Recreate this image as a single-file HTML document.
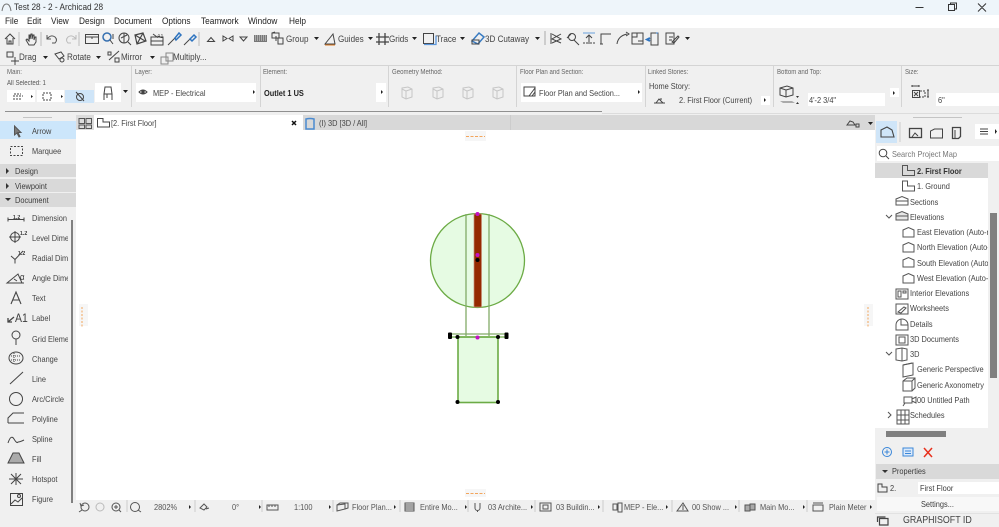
<!DOCTYPE html>
<html><head><meta charset="utf-8"><style>
html,body{margin:0;padding:0}
body{width:999px;height:527px;overflow:hidden;position:relative;background:#f0f0f0;font-family:"Liberation Sans",sans-serif;color:#333}
.r{position:absolute}
.t{position:absolute;white-space:nowrap;font-size:8.5px;line-height:10px;color:#3c3c3c;transform:scaleX(.87);transform-origin:0 0}
.m{font-size:9.5px;top:17px;color:#222}
.b{font-size:9.3px;color:#444}
.l{font-size:7px;color:#666;top:68px}
.n{font-size:8.5px;color:#444;left:32px}
.p{font-size:8.5px;color:#444}
.s{font-size:8.5px;color:#555;top:502px}
svg{position:absolute;left:0;top:0}
</style></head><body>
<div class="r" style="left:0;top:0;width:999px;height:15px;background:#eef5fa"></div>
<div class="r" style="left:0;top:15px;width:999px;height:13px;background:#fff"></div>
<div class="r" style="left:0;top:65px;width:999px;height:1px;background:#d4d4d4"></div>
<div class="r" style="left:5px;top:111px;width:597px;height:1px;background:#909090"></div>
<div class="r" style="left:602px;top:113px;width:397px;height:1px;background:#dcdcdc"></div>
<div class="r" style="left:23px;top:117px;width:29px;height:1px;background:#c4c4c4"></div>
<div class="r" style="left:913px;top:117px;width:49px;height:1px;background:#c4c4c4"></div>
<div class="r" style="left:76px;top:115px;width:799px;height:15px;background:#d8d8d8"></div>
<div class="r" style="left:94px;top:115px;width:209px;height:15px;background:#fff"></div>
<div class="r" style="left:76px;top:115px;width:18px;height:15px;background:#dcdcdc"></div>
<div class="r" style="left:510px;top:115px;width:1px;height:15px;background:#ccc"></div>
<div class="r" style="left:76px;top:130px;width:799px;height:367px;background:#fff"></div>
<div class="r" style="left:76px;top:497px;width:799px;height:3px;background:#fff"></div>
<div class="r" style="left:0;top:121px;width:76px;height:18px;background:#cce6fb"></div>
<div class="r" style="left:0;top:164px;width:76px;height:13px;background:#d9d9d9"></div>
<div class="r" style="left:0;top:179px;width:76px;height:13px;background:#d9d9d9"></div>
<div class="r" style="left:0;top:193px;width:76px;height:14px;background:#d9d9d9"></div>
<div class="r" style="left:71px;top:220px;width:2px;height:283px;background:#808080"></div>
<div class="r" style="left:79px;top:304px;width:9px;height:22px;background:#f6f6f6"></div>
<div class="r" style="left:864px;top:304px;width:9px;height:22px;background:#f6f6f6"></div>
<div class="r" style="left:465px;top:131px;width:21px;height:10px;background:#f6f6f6"></div>
<div class="r" style="left:465px;top:489px;width:21px;height:8px;background:#f6f6f6"></div>

<!-- option bar fields -->
<div class="r" style="left:7px;top:90px;width:28px;height:12px;background:#fff"></div>
<div class="r" style="left:37px;top:90px;width:27px;height:12px;background:#fff"></div>
<div class="r" style="left:65px;top:90px;width:29px;height:13px;background:#cfe5f8"></div>
<div class="r" style="left:95px;top:83px;width:26px;height:19px;background:#fff"></div>
<div class="r" style="left:136px;top:83px;width:120px;height:19px;background:#fff"></div>
<div class="r" style="left:376px;top:83px;width:10px;height:19px;background:#fff"></div>
<div class="r" style="left:521px;top:83px;width:121px;height:19px;background:#fff"></div>
<div class="r" style="left:761px;top:96px;width:9px;height:9px;background:#fff"></div>
<div class="r" style="left:808px;top:93px;width:77px;height:13px;background:#fff"></div>
<div class="r" style="left:890px;top:88px;width:9px;height:9px;background:#fff"></div>
<div class="r" style="left:936px;top:93px;width:63px;height:13px;background:#fff"></div>
<div class="r" style="left:131px;top:66px;width:1px;height:41px;background:#d4d4d4"></div>
<div class="r" style="left:260px;top:66px;width:1px;height:41px;background:#d4d4d4"></div>
<div class="r" style="left:388px;top:66px;width:1px;height:41px;background:#d4d4d4"></div>
<div class="r" style="left:516px;top:66px;width:1px;height:41px;background:#d4d4d4"></div>
<div class="r" style="left:645px;top:66px;width:1px;height:41px;background:#d4d4d4"></div>
<div class="r" style="left:773px;top:66px;width:1px;height:41px;background:#d4d4d4"></div>
<div class="r" style="left:901px;top:66px;width:1px;height:41px;background:#d4d4d4"></div>

<!-- right panel -->
<div class="r" style="left:876px;top:121px;width:21px;height:22px;background:#cfe5f8"></div>
<div class="r" style="left:975px;top:124px;width:24px;height:15px;background:#fff"></div>
<div class="r" style="left:877px;top:146px;width:122px;height:15px;background:#fff"></div>
<div class="r" style="left:875px;top:163px;width:113px;height:265px;background:#fff"></div>
<div class="r" style="left:875px;top:163px;width:113px;height:15px;background:#d9d9d9"></div>
<div class="r" style="left:990px;top:213px;width:7px;height:165px;background:#808080"></div>
<div class="r" style="left:886px;top:431px;width:60px;height:6px;background:#808080"></div>
<div class="r" style="left:876px;top:464px;width:123px;height:15px;background:#d9d9d9"></div>
<div class="r" style="left:918px;top:482px;width:81px;height:12px;background:#fff"></div>
<div class="r" style="left:877px;top:497px;width:122px;height:14px;background:#f8f8f8"></div>
<div class="r" style="left:875px;top:513px;width:124px;height:1px;background:#e2e2e2"></div>

<svg width="999" height="527" viewBox="0 0 999 527" fill="none" stroke="#444" stroke-width="1">
<!-- title -->
<path d="M2 11Q3 4 6.500 4Q10 4 11 11" stroke="#777"/>
<path d="M915.500 7.500h8M948.500 4.500h6v6h-6zM950.500 4.500v-1.500h6v6h-2M978 3.500l8 8M986 3.500l-8 8" stroke="#333"/>
<!-- toolbar row 1 -->
<path d="M19 32v14M41 32v14M79 32v14M199 32v14" stroke="#bbb"/>
<path d="M5 39l5-5 5 5M7 38v6h6v-6M9 44v-3h2v3"/>
<path d="M29 45l-3-5 1-1 2 2v-6h1v4l1-5h1v5l1-4h1v5l1-3h1v5l-2 3z"/>
<path d="M47 39q4-5 8-2q3 3 0 6h-3M47 35v4h4" stroke="#555"/>
<path d="M76 39q-4-5-8-2q-3 3 0 6h3M76 35v4h-4" stroke="#bbb"/>
<rect x="85.500" y="34.500" width="13" height="9"/><path d="M85 37h13M92 37v2" />
<circle cx="107" cy="37" r="4" stroke="#356fb0" stroke-width="1.500"/><path d="M110 40l3 4M113 34v5"/>
<circle cx="124" cy="38" r="5"/><path d="M128 42l3 3M121 38l6-3M124 33v10"/>
<path d="M135 35l8-2 3 8-9 3zM135 35l10 6M143 33l-6 11" stroke-width="1.200"/>
<path d="M151 37h12v8h-12zM151 41h12" /><path d="M153 34l4 3"/>
<path d="M168 45l7-7" stroke="#444"/><path d="M175 38l4-5 2 2-5 5z" stroke="#2e74c0" stroke-width="1.500"/>
<path d="M184 45l6-6" stroke="#444"/><path d="M190 39l4-4 2 2-4 4z" stroke="#2e74c0" stroke-width="1.500"/>
<path d="M207.500 41.500l3.500-4 3.500 4zM223 36v5l4-2.500zM233 36v5l-4-2.500zM240 37h7l-3.500 4z"/>
<rect x="254" y="35" width="13" height="7" fill="#777" stroke="none"/>
<path d="M255 36h11M255 38h11M255 40h11" stroke="#ddd" stroke-dasharray="1 1"/>
<path d="M272 33h7v5h-7zM279 38h4v6h-5v-6" /><path d="M272 33l3-1M276 36v5"/>
<path d="M314 37l5 0-2.500 3z" fill="#222" stroke="none"/>
<path d="M325 44l8-10 2 10z"/><path d="M325 45h10" stroke="#e07a20"/>
<path d="M368 37l5 0-2.500 3z" fill="#222" stroke="none"/>
<path d="M376 37h13M376 42h13M379 33v12M385 33v12" stroke-width="1.300"/>
<path d="M412 37l5 0-2.500 3z" fill="#222" stroke="none"/>
<rect x="423.500" y="33.500" width="10" height="10"/><path d="M424 44.500h12v-9" stroke="#5c98dc" stroke-width="1.300"/>
<path d="M460 37l5 0-2.500 3z" fill="#222" stroke="none"/>
<path d="M472 41l7-8 5 4-6 7z" stroke="#3a7cc2" stroke-width="1.500"/><path d="M472 40h7v4h-7z"/>
<path d="M535 37l5 0-2.500 3z" fill="#222" stroke="none"/>
<path d="M545 31v14" stroke="#aaa"/>
<path d="M552 34l9 5-9 4M561 34l-9 5 9 4M551 33v11" />
<circle cx="572" cy="37" r="3.500"/><path d="M574 40l5 5M567 38l4-4"/>
<path d="M583 33h12" stroke="#68a1dd"/><path d="M589 44v-9M586 38l3-3 3 3M584 44v-2M587 44v-2M591 44v-2M594 44v-2"/>
<path d="M601 44v-10h10M603 34h6M600 44h3"/>
<path d="M617 44q1-8 10-10M626 32l3 2-3 2"/>
<path d="M632 33h11v11h-11zM632 37h5v-4M638 41h5" />
<rect x="651" y="33" width="7" height="12"/><path d="M656 33h2" stroke="#2e74c0"/><path d="M650 38l-3 1.500 3 1.500" stroke="#2e74c0" stroke-width="2"/>
<path d="M666 33h8v11h-8zM669 37h4M669 40h3M672 42l6-6 1 1-5 6z"/>
<path d="M685 37l5 0-2.500 3z" fill="#222" stroke="none"/>
<!-- toolbar row 2 -->
<path d="M7 52h6v5h-6zM11 61h8M15 57v8"/>
<path d="M43 56l5 0-2.500 3z M96 56l5 0-2.500 3zM150 56l5 0-2.500 3z" fill="#222" stroke="none"/>
<path d="M55 54l6-2 3 4-5 3z"/><circle cx="62" cy="60" r="2"/>
<path d="M109 60l10-9M108 52h3v3h-3zM115 58h4v4h-4z"/>
<rect x="166" y="53" width="7" height="8" stroke="#888"/><rect x="161" y="57" width="7" height="7" stroke="#888"/>
<!-- option bar -->
<path d="M13 99h9M13 96h10M14 94h7" stroke="#444" stroke-dasharray="2 1"/>
<path d="M31 95l2 1.500-2 1.500zM61 95l2 1.500-2 1.500z" fill="#222" stroke="none"/>
<path d="M43 93h8v7h-8z" stroke-dasharray="2 1"/>
<circle cx="80" cy="97" r="3.500"/><path d="M76 92l8 9"/>
<path d="M105 87h6l1 7h-8zM104 94v6M112 94v6M107 94v4"/>
<path d="M123 90l5 0-2.500 3zM253 90l0 4 2-2zM381 90l0 4 2-2zM638 90l0 4 2-2z" fill="#222" stroke="none"/>
<path d="M139 92q4-4 8 0q-4 4-8 0z"/><circle cx="143" cy="92" r="1.300" fill="#444"/>
<g stroke="#c6c6c6"><path d="M402 88l6-1 4 2v8l-6 2-4-2zM402 89l4 2v8M406 91l6-2"/><path d="M433 88l6-1 4 2v8l-6 2-4-2zM433 89l4 2v8M437 91l6-2"/><path d="M463 88l6-1 4 2v8l-6 2-4-2zM463 89l4 2v8M467 91l6-2"/><path d="M493 88l6-1 4 2v8l-6 2-4-2zM493 89l4 2v8M497 91l6-2"/></g>
<rect x="524" y="87" width="11" height="9"/><path d="M529 96l6-8M532 96l3-4"/>
<path d="M654 103h11M656 103l3-4 4 4M660 99h2" />
<path d="M764 98l0 4 2-2zM893 91l0 4 2-2z" fill="#222" stroke="none"/>
<path d="M780 88l7-2 6 2v7l-7 2-6-2zM780 88l6 2v7M786 90l7-2"/>
<path d="M780 101h12l3 2h-12z" fill="#aaa" stroke="none"/>
<path d="M796 96l3 0-1.500 2zM796 104l3 0-1.500-2z" fill="#333" stroke="none"/>
<path d="M912 86h7M912 85v2M919 85v2"/><rect x="912.500" y="90.500" width="7" height="7"/><path d="M914 92l4 4M918 92l-4 4"/><path d="M920 91h5v6h-5" stroke-dasharray="2 1"/><path d="M928 90v7M927 90h2M927 97h2"/>
<!-- tabs -->
<path d="M79 118.500h5.500v5h-5.500zM86 118.500h5.500v5h-5.500zM79 125h5.500v3.500h-5.500zM86 125h5.500v3.500h-5.500z" stroke="#555"/>
<path d="M97.500 118.500v8.500h12v-5h-6.500v-3.500z"/>
<path d="M292 121l4 4M296 121l-4 4" stroke="#111" stroke-width="1.500"/>
<path d="M306 119q4-1 8 0v10h-8z" stroke="#4a8ad0" stroke-width="1.500"/>
<path d="M847 125l3-4 3 1 2 3zM847 125h8M856 124h3v3h-3z"/><path d="M868 122l5 0-2.500 3z" fill="#222" stroke="none"/>
<!-- left panel -->
<path d="M14.500 126v9l2.500-2 2 4 1-.5-2-4h3z" fill="#7a7a7a" stroke="#555"/>
<rect x="10.500" y="146.500" width="12" height="9" stroke-dasharray="2 1.500"/>
<path d="M6 168v6l3-3zM6 183v6l3-3zM5 198l6 0-3 3z" fill="#333" stroke="none"/>
<path d="M8 219.500h16M8 217.500v4M24 217.500v4"/>
<circle cx="15" cy="237" r="4.500"/><path d="M9 237h12M15 231v12"/>
<path d="M11 256l4 3.500M23 251l-8 8.500v4"/>
<path d="M7 283l11-9 4 9zM7 283h17M14 279l3 2"/>
<path d="M11 304l5-12 5 12M13 300h6" stroke-width="1.100"/>
<path d="M8 322l6-5M8 318v4h4" stroke-width="1.300"/>
<circle cx="16" cy="335" r="4"/><path d="M16 339v6"/>
<ellipse cx="16" cy="358" rx="7" ry="6"/><path d="M11 356h10M11 360h10M14 353v10" stroke-dasharray="1 1"/>
<path d="M10 384l13-12"/>
<circle cx="16" cy="399" r="6.500"/>
<path d="M8 423v-5l5-5h11M8 423h16"/>
<path d="M8 443q3-9 6-4t4 3q2 0 6-2"/>
<path d="M8 463l5-10h6l5 10z" fill="#aaa"/>
<path d="M16 473v12M9 479h14M11 474l10 10M21 474l-10 10"/>
<rect x="10.500" y="493.500" width="12" height="12"/><path d="M11 504l4-4 3 2 4-4"/><circle cx="19" cy="496" r="1.500"/>
<!-- canvas -->
<path d="M82 307v20M868 307v20" stroke="#f3a55c" stroke-dasharray="2 1.500"/>
<path d="M466 136.500h19M466 493.500h19" stroke="#f3a55c" stroke-dasharray="3 1.500"/>
<circle cx="477.500" cy="260.500" r="47" fill="#e6fbe3" stroke="#6cab45" stroke-width="1.300"/>
<rect x="458" y="337" width="40" height="65.500" fill="#e6fbe3" stroke="#6cab45" stroke-width="1.600"/>
<path d="M466 214v122M489 214v122" stroke="#82ab68" stroke-width="1.300"/>
<path d="M450 334h56" stroke="#82ab68" stroke-width="1.300"/><path d="M450 337h56" stroke="#6cab45" stroke-width="1.300"/>
<rect x="474" y="214" width="7.500" height="93" fill="#952a00" stroke="#c78d75" stroke-width=".7"/>
<g fill="#000" stroke="none"><circle cx="477.500" cy="260" r="2"/><circle cx="457.500" cy="337" r="2"/><circle cx="498" cy="337" r="2"/><circle cx="457.500" cy="402" r="2"/><circle cx="498" cy="402" r="2"/><rect x="448" y="332.500" width="4" height="6.500" rx="1"/><rect x="504.500" y="332.500" width="4" height="6.500" rx="1"/></g>
<g fill="#c412c4" stroke="none"><circle cx="477.500" cy="214" r="2"/><circle cx="477.500" cy="255" r="2"/><circle cx="477.500" cy="337.500" r="2"/></g>
<!-- right panel icons -->
<path d="M881 137v-7l6-3 5 3 2 7zM881 137h13" stroke-width="1.100"/>
<path d="M900 122v20" stroke="#ccc"/>
<rect x="909.500" y="128.500" width="12" height="9" stroke-width="1.300"/><path d="M912 137l3-4 3 3"/>
<path d="M930.500 138v-7l4-2h8v9zM942.500 138v-9"/>
<path d="M952.500 127.500h8v9l-2 2h-6z" stroke-width="1.300"/><path d="M955 130v8"/>
<path d="M980 129h8M980 131.500h8M980 134h8" stroke-width="1.100"/>
<path d="M995 129v5l2-2.500z" fill="#222" stroke="none"/>
<circle cx="883" cy="153" r="3.800"/><path d="M886 156l3 3"/>
<g stroke="#555">
<path d="M902.500 165.500v10h12v-5h-7v-5z"/><path d="M902.500 181v10h12v-5h-7v-5z"/>
<path d="M896 199l6-2.500 6 2.500v6h-12zM896 201h12"/>
<path d="M896 214l6-2.500 6 2.500v6h-12zM896 216h12" fill="#e6e6e6"/>
<path d="M903 230l5.500-2.500 5.500 2.500v7h-11zM903 245l5.500-2.500 5.500 2.500v7h-11zM903 260l5.500-2.500 5.500 2.500v7h-11zM903 276l5.500-2.500 5.500 2.500v7h-11z"/>
<path d="M896 289h12v10h-12zM898 291h3v6h-3zM903 291h3v2h-3z"/>
<path d="M896 304h12v10h-12zM898 312l6-5 2 1-5 5z"/>
<path d="M896 325a6 6 0 1 1 12 0v5h-12zM901 319v6h7"/>
<path d="M896 335h12v10h-12zM899 337h6v6h-6z"/>
<path d="M896 349l6-1 5 1v11l-5 1-6-1zM902 348v13"/>
<path d="M903 365l10-2v12l-10 2z"/><path d="M903 365l9-2"/>
<path d="M903 381l4-3h8v10l-3 3h-9zM903 381h9v10M912 381l3-3"/>
<path d="M904 397h8v6h-8zM912 399l4-2v6l-4-2M905 403l-2 3"/>
<path d="M897 410h12v14h-12zM897 415h12M897 420h12M901 410v14M905 410v14"/>
<path d="M886 215l3 3 3-3M886 352l3 3 3-3M888 412l3 3-3 3" />
</g>
<circle cx="887" cy="452" r="4.500" stroke="#3b87d9"/><path d="M884.500 452h5M887 449.500v5" stroke="#3b87d9"/>
<rect x="903" y="448" width="10" height="8" stroke="#3b87d9" fill="#dbeafa"/><path d="M905 451h6M905 453.500h6" stroke="#3b87d9"/>
<path d="M924 448l8 9M932 448l-8 9" stroke="#e8301c" stroke-width="1.500"/>
<path d="M882 470l6 0-3 3z" fill="#333" stroke="none"/>
<path d="M878 484v8h9v-5h-5v-3z"/>
<path d="M879.500 518.500h8.500v6.500h-8.500zM877.500 522v-5h8" stroke-width="1.200"/>
<!-- bottom bar -->
<g stroke="#555">
<circle cx="85" cy="507" r="4"/><path d="M82 510l-3 2M80 503l1 3 3-1"/>
<circle cx="100" cy="507" r="4" stroke="#bbb"/>
<circle cx="116" cy="507" r="4"/><path d="M119 510l2 2M114 507h4M116 505v4"/>
<circle cx="135" cy="507" r="4.500"/><path d="M138 510l3 2"/>
<path d="M200 508l4-4 3 3-3 3zM206 509l3-1"/>
<rect x="267" y="505" width="11" height="5"/><path d="M269 505v2M272 505v2M275 505v2"/>
<path d="M337 505l8-1v5l-8 2zM337 505l3-2h8v5l-3 1"/>
<rect x="405" y="503" width="9" height="8"/><path d="M405 505h9M405 507h9M405 509h9"/>
<path d="M475 503v5a2.500 2.500 0 0 0 5 0v-5M477.500 510v2"/>
<rect x="540" y="503" width="11" height="8"/><rect x="543" y="505" width="5" height="4"/>
<path d="M613 504h4v6h-4zM618 503h4v9h-4z"/>
<path d="M677 511l6-8 5 8zM683 505v5"/>
<path d="M745 505h5v6h-5zM750 504h5v6h-5z" fill="#aaa"/>
<path d="M813 503h10M813 505h10v6h-10zM813 511h10"/>
</g>
<path d="M189 505l0 4 2-2zM259 505l0 4 2-2zM329 505l0 4 2-2zM394 505l0 4 2-2zM465 505l0 4 2-2zM531 505l0 4 2-2zM598 505l0 4 2-2zM666 505l0 4 2-2zM735 505l0 4 2-2zM803 505l0 4 2-2zM870 505l0 4 2-2z" fill="#222" stroke="none"/>
<path d="M127 500v12M195 500v12M262 500v12M333 500v12M400 500v12M468 500v12M535 500v12M603 500v12M672 500v12M739 500v12M807 500v12" stroke="#ccc"/>
</svg>

<div class="t" style="left:14px;top:3px;font-size:9.500px;color:#333">Test 28 - 2 - Archicad 28</div>
<div class="t m" style="left:5px">File</div><div class="t m" style="left:27px">Edit</div><div class="t m" style="left:51px">View</div><div class="t m" style="left:79px">Design</div><div class="t m" style="left:114px">Document</div><div class="t m" style="left:162px">Options</div><div class="t m" style="left:201px">Teamwork</div><div class="t m" style="left:248px">Window</div><div class="t m" style="left:289px">Help</div>

<div class="t" style="left:157px;top:32px;font-size:6px">A1</div>
<div class="t" style="left:13px;top:213px;font-size:6px;font-weight:bold">1.2</div>
<div class="t" style="left:20px;top:229px;font-size:6px;font-weight:bold">1.2</div>
<div class="t" style="left:18px;top:249px;font-size:6px;font-weight:bold">1.2</div>
<div class="t" style="left:20px;top:272px;font-size:9px">α</div>
<div class="t" style="left:15px;top:312px;font-size:12px;line-height:12px">A1</div>

<div class="t b" style="left:286px;top:34px">Group</div><div class="t b" style="left:338px;top:34px">Guides</div><div class="t b" style="left:389px;top:34px">Grids</div><div class="t b" style="left:436px;top:34px">Trace</div><div class="t b" style="left:485px;top:34px">3D Cutaway</div>
<div class="t b" style="left:19px;top:52px">Drag</div><div class="t b" style="left:67px;top:52px">Rotate</div><div class="t b" style="left:121px;top:52px">Mirror</div><div class="t b" style="left:173px;top:52px">Multiply...</div>

<div class="t l" style="left:7px">Main:</div><div class="t l" style="left:135px">Layer:</div><div class="t l" style="left:263px">Element:</div><div class="t l" style="left:392px">Geometry Method:</div><div class="t l" style="left:520px">Floor Plan and Section:</div><div class="t l" style="left:648px">Linked Stories:</div><div class="t l" style="left:777px">Bottom and Top:</div><div class="t l" style="left:905px">Size:</div>
<div class="t" style="left:7px;top:79px;font-size:7px;color:#555">All Selected: 1</div>
<div class="t" style="left:153px;top:88px;color:#444">MEP - Electrical</div>
<div class="t" style="left:264px;top:88px;font-weight:bold;color:#222">Outlet 1 US</div>
<div class="t" style="left:539px;top:88px;color:#444">Floor Plan and Section...</div>
<div class="t" style="left:649px;top:81px;color:#444">Home Story:</div>
<div class="t" style="left:679px;top:95px;color:#444">2. First Floor (Current)</div>
<div class="t" style="left:809px;top:95px;color:#444">4'-2 3/4"</div>
<div class="t" style="left:938px;top:95px;color:#444">6"</div>

<div class="t" style="left:111px;top:118px;color:#444">[2. First Floor]</div>
<div class="t" style="left:319px;top:118px;color:#444">(I) 3D [3D / All]</div>

<div class="t n" style="top:126px">Arrow</div><div class="t n" style="top:146px">Marquee</div>
<div class="t" style="left:15px;top:166px">Design</div><div class="t" style="left:15px;top:181px">Viewpoint</div><div class="t" style="left:15px;top:195px">Document</div>
<div class="r" style="left:32px;top:210px;width:36px;height:300px;overflow:hidden">
<div class="t p" style="left:0;top:3px">Dimension</div><div class="t p" style="left:0;top:23px">Level Dimension</div><div class="t p" style="left:0;top:43px">Radial Dimension</div><div class="t p" style="left:0;top:63px">Angle Dimension</div><div class="t p" style="left:0;top:83px">Text</div><div class="t p" style="left:0;top:103px">Label</div><div class="t p" style="left:0;top:124px">Grid Element</div><div class="t p" style="left:0;top:144px">Change</div><div class="t p" style="left:0;top:164px">Line</div><div class="t p" style="left:0;top:184px">Arc/Circle</div><div class="t p" style="left:0;top:204px">Polyline</div><div class="t p" style="left:0;top:224px">Spline</div><div class="t p" style="left:0;top:244px">Fill</div><div class="t p" style="left:0;top:264px">Hotspot</div><div class="t p" style="left:0;top:284px">Figure</div>
</div>

<div class="t" style="left:892px;top:149px;color:#777">Search Project Map</div>
<div class="r" style="left:875px;top:163px;width:113px;height:265px;overflow:hidden">
<div class="t p" style="left:42px;top:3px;font-weight:bold;color:#333">2. First Floor</div>
<div class="t p" style="left:42px;top:18px">1. Ground</div>
<div class="t p" style="left:35px;top:34px">Sections</div>
<div class="t p" style="left:35px;top:49px">Elevations</div>
<div class="t p" style="left:42px;top:64px">East Elevation (Auto-rebuild)</div>
<div class="t p" style="left:42px;top:79px">North Elevation (Auto-rebuild)</div>
<div class="t p" style="left:42px;top:95px">South Elevation (Auto-rebuild)</div>
<div class="t p" style="left:42px;top:110px">West Elevation (Auto-rebuild)</div>
<div class="t p" style="left:35px;top:125px">Interior Elevations</div>
<div class="t p" style="left:35px;top:140px">Worksheets</div>
<div class="t p" style="left:35px;top:156px">Details</div>
<div class="t p" style="left:35px;top:171px">3D Documents</div>
<div class="t p" style="left:35px;top:186px">3D</div>
<div class="t p" style="left:42px;top:201px">Generic Perspective</div>
<div class="t p" style="left:42px;top:217px">Generic Axonometry</div>
<div class="t p" style="left:42px;top:232px">00 Untitled Path</div>
<div class="t p" style="left:35px;top:247px">Schedules</div>
</div>
<div class="t" style="left:892px;top:466px">Properties</div>
<div class="t" style="left:890px;top:483px">2.</div>
<div class="t" style="left:920px;top:483px">First Floor</div>
<div class="t" style="left:921px;top:499px">Settings...</div>
<div class="t" style="left:903px;top:516px;font-size:10.200px;color:#444">GRAPHISOFT ID</div>

<div class="t s" style="left:154px">2802%</div><div class="t s" style="left:232px">0°</div><div class="t s" style="left:294px">1:100</div><div class="t s" style="left:352px">Floor Plan...</div><div class="t s" style="left:420px">Entire Mo...</div><div class="t s" style="left:488px">03 Archite...</div><div class="t s" style="left:556px">03 Buildin...</div><div class="t s" style="left:624px">MEP - Ele...</div><div class="t s" style="left:692px">00 Show ...</div><div class="t s" style="left:760px">Main Mo...</div><div class="t s" style="left:829px">Plain Meter</div>
</body></html>
